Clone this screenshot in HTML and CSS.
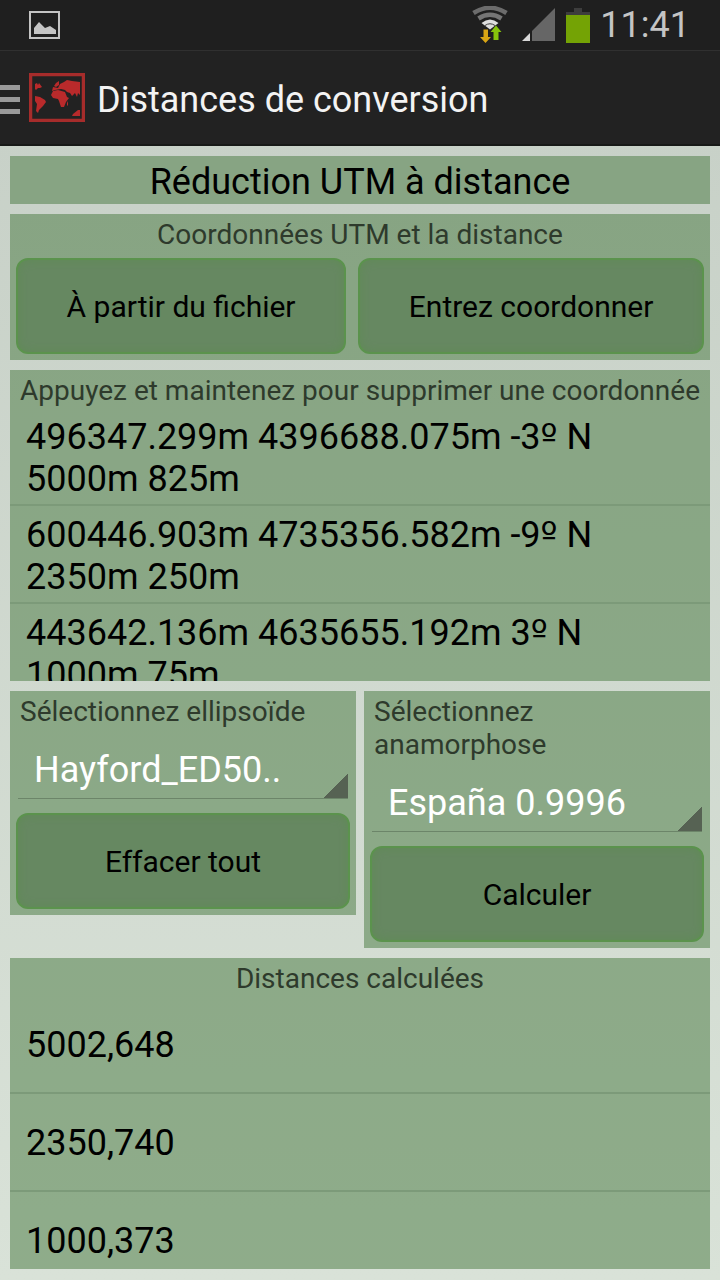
FILE: index.html
```
<!DOCTYPE html>
<html lang="fr">
<head>
    <meta charset="UTF-8">
    <meta name="viewport" content="width=device-width, initial-scale=1">
    <title>Distances de conversion</title>
    <link rel="stylesheet" href="styles.css">
</head>
<body>
    <div class="status-bar">
        <svg class="icon-picture" width="32" height="28" viewBox="0 0 32 28">
            <rect x="1" y="1" width="29" height="26" fill="none" stroke="#c4c4c4" stroke-width="2"/>
            <path d="M5 23V17L10 11L16 17L21 15L27 19V23Z" fill="#c4c4c4"/>
        </svg>
        <div class="status-icons">
            <svg width="36" height="38" viewBox="0 0 36 38">
                <g fill="none">
                    <path d="M1.500 7Q18 -3.500 34.500 7" stroke="#6c6c6c" stroke-width="4.500"/>
                    <path d="M6.500 12.500Q18 5 29.500 12.500" stroke="#757575" stroke-width="4.500"/>
                </g>
                <path d="M9.500 17Q18 10 26.500 17L18 23.500Z" fill="#dedede"/>
                <path d="M13 19.500Q18 16 23 19.500" fill="none" stroke="#3a3a3a"/>
                <path d="M11.500 23.500H16V31H19L13.500 37L8 31H11.500Z" fill="#d9a514"/>
                <path d="M24 19.500L29.500 26H26.500V34H21.500V26H18.500Z" fill="#86c40c"/>
            </svg>
            <svg width="34" height="34" viewBox="0 0 34 34">
                <path d="M0 33L8 25V33Z" fill="#d8d8d8"/>
                <path d="M10 23L33 0V33H10Z" fill="#666"/>
            </svg>
            <svg width="24" height="35" viewBox="0 0 24 35">
                <path d="M8 0H16V4H24V7H0V4H8Z" fill="#3d3d3d"/>
                <rect y="7" width="24" height="28" fill="#74a305"/>
            </svg>
            <span class="clock">11:41</span>
        </div>
    </div>
    <header>
        <svg class="icon-menu" width="20" height="30" viewBox="0 0 20 30" fill="#9a9a9a">
            <rect width="20" height="5"/>
            <rect y="12" width="20" height="5"/>
            <rect y="24" width="20" height="5"/>
        </svg>
        <svg class="logo" width="56" height="49" viewBox="0 0 56 49">
            <rect x="1.500" y="1.500" width="53" height="46" fill="none" stroke="#a62c2b" stroke-width="3.500"/>
            <g fill="#b92a2b">
                <path d="M6 11L8 10L9 12L10 10L13 14L11 15L9 15L7 17L6 16Z"/>
                <path d="M6 23L11 24L16 27L17 29L14 33L10 37L9 40L7 38L8 31L6 28Z"/>
                <path d="M27 10L30 8L30 12L27 14L25 13Z"/>
                <path d="M31 11L35 9L38 7L43 8L51 9V22L49 20L48 24L46 20L43 23L41 20L38 19L36 17L32 16L26 17L23 18L24 14L29 15Z"/>
                <path d="M24 18L29 17L36 19L38 24L40 25L37 29L35 34L32 34L30 28L29 26L24 25L22 22Z"/>
                <path d="M38 30L39 28L39 32L38 33ZM44 41L49 37L51 37V43H43Z"/>
            </g>
        </svg>
        <span class="app-title">Distances de conversion</span>
    </header>

    <div class="container">
        <h1 class="panel">Réduction UTM à distance</h1>

        <div class="panel">
            <div class="label center">Coordonnées UTM et la distance</div>
            <div class="button-row">
                <button type="button">À partir du fichier</button>
                <button type="button">Entrez coordonner</button>
            </div>
        </div>

        <div class="panel list-panel">
            <div class="label center">Appuyez et maintenez pour supprimer une coordonnée</div>
            <ul class="list">
                <li>496347.299m 4396688.075m -3<span class="degree">º</span> N<br>5000m 825m</li>
                <li>600446.903m 4735356.582m -9<span class="degree">º</span> N<br>2350m 250m</li>
                <li>443642.136m 4635655.192m 3<span class="degree">º</span> N<br>1000m 75m</li>
            </ul>
        </div>

        <div class="columns">
            <div class="panel">
                <label class="label" for="ellipsoid">Sélectionnez ellipsoïde</label>
                <select id="ellipsoid">
                    <option>Hayford_ED50..</option>
                </select>
                <button type="button">Effacer tout</button>
            </div>
            <div class="panel">
                <label class="label" for="anamorphosis">Sélectionnez anamorphose</label>
                <select id="anamorphosis">
                    <option>España 0.9996</option>
                </select>
                <button type="button">Calculer</button>
            </div>
        </div>

        <div class="panel list-panel">
            <div class="label center">Distances calculées</div>
            <ul class="list results">
                <li>5002,648</li>
                <li>2350,740</li>
                <li>1000,373</li>
            </ul>
        </div>
    </div>
</body>
</html>
```
FILE: styles.css
```
* {
    box-sizing: border-box;
}
body {
    font-family: Roboto, sans-serif;
    display: flex;
    flex-direction: column;
    height: 100vh;
    margin: 0;
    color: #000;
    background: linear-gradient(#c6cfc6, #d9e2d8);
}
svg {
    display: block;
    flex: none;
}
.status-bar {
    display: flex;
    justify-content: space-between;
    align-items: center;
    flex: none;
    height: 50px;
    padding: 0 30px 0 29px;
    background: #1f1f1f;
}
.status-icons {
    display: flex;
    align-items: center;
    gap: 10px;
}
.status-icons svg:nth-child(1) {
    margin-right: 4px;
}
.clock {
    font-size: 36px;
    line-height: 48px;
    color: #c4c4c4;
}
header {
    display: flex;
    align-items: center;
    flex: none;
    height: 96px;
    padding-top: 4px;
    background: #222;
    border-top: 1px solid #303030;
    border-bottom: 2px solid #171917;
}
.logo {
    margin: 0 12px 4px 9px;
}
.app-title {
    font-size: 36px;
    color: #f3f3f3;
}
.container {
    display: flex;
    flex-direction: column;
    flex: 1;
    min-height: 0;
    gap: 10px;
    padding: 10px 10px 11px;
}
.panel {
    padding: 4px 6px 6px;
    background: rgba(75, 122, 68, 0.52);
}
h1.panel {
    margin: 0;
    padding: 4px;
    font-size: 36px;
    font-weight: normal;
    line-height: 44px;
    height: 48px;
    text-align: center;
}
.label {
    display: block;
    padding: 0 4px;
    font-size: 28px;
    line-height: 33px;
    color: #2e3a2c;
}
.label.center {
    padding: 0;
    text-align: center;
    white-space: nowrap;
}
.button-row {
    display: flex;
    gap: 12px;
    margin-top: 7px;
}
.button-row button {
    flex: 1 1 auto;
}
button {
    width: 100%;
    height: 96px;
    padding: 0;
    font-family: inherit;
    font-size: 30px;
    color: #000;
    background: #668861;
    border: 2px solid #5b934d;
    border-radius: 12px;
    box-shadow: inset 0 0 8px #608b56;
}
.button-row button {
    width: auto;
}

/* Both list panels share the height that is left over */
.list-panel {
    display: flex;
    flex-direction: column;
    flex: 1 1 0;
    min-height: 0;
    padding: 4px 0 0;
}
.list {
    flex: 1;
    min-height: 0;
    margin: 1px 0 0;
    padding: 0;
    overflow-y: auto;
    scrollbar-width: none;
    list-style: none;
}
.list li {
    display: flow-root;
    height: 98px;
    padding: 8px 16px 4px;
    font-size: 36px;
    line-height: 42px;
    border-bottom: 2px solid #7c9a79;
}
.list.results li {
    padding: 0 16px;
    line-height: 98px;
}
.degree {
    font-family: "DejaVu Sans", sans-serif;
    line-height: 1;
}

.columns {
    display: grid;
    grid-template-columns: 1fr 1fr;
    align-items: start;
    gap: 8px;
}
select {
    display: block;
    width: calc(100% - 4px);
    height: 60px;
    margin: 11px 2px 14px;
    padding: 2px 24px 0 16px;
    font-family: inherit;
    font-size: 36px;
    color: #fff;
    appearance: none;
    border: 0;
    border-bottom: 1px solid #6c8569;
    border-radius: 0;
    background: linear-gradient(135deg, transparent 50%, #566253 50%) right bottom / 24px 24px no-repeat;
}
```
